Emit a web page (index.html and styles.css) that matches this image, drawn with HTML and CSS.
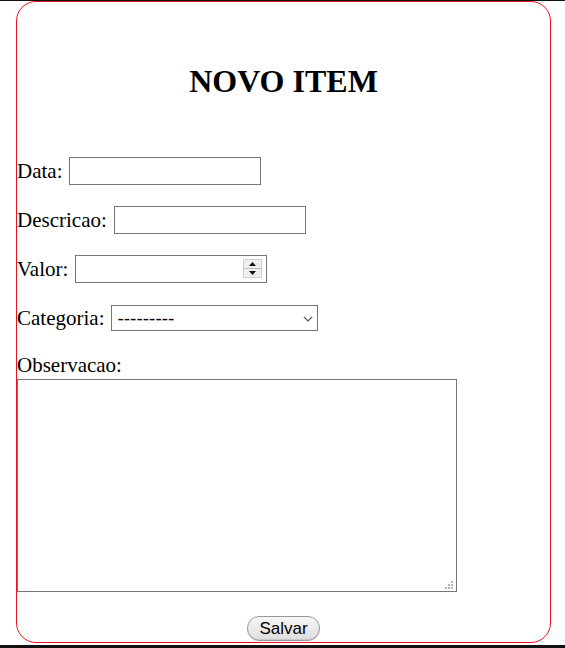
FILE: index.html
```html
<!DOCTYPE html>
<html lang="pt">
<head>
<meta charset="utf-8">
<title>Novo Item</title>
<link rel="stylesheet" href="styles.css">
</head>
<body>
<div class="topline"></div>
<div class="card">
  <h1 class="title">NOVO ITEM</h1>
  <form class="form">
    <div class="row">
      <label class="label" for="data">Data:</label>
      <input class="field" type="text" id="data">
    </div>
    <div class="row">
      <label class="label" for="descricao">Descricao:</label>
      <input class="field" type="text" id="descricao">
    </div>
    <div class="row">
      <label class="label" for="valor">Valor:</label>
      <span class="numwrap">
        <input class="field field-num" type="number" id="valor">
        <span class="spin" aria-hidden="true">
          <span class="spin-btn"><svg width="7" height="4" viewBox="0 0 7 4"><path d="M3.5 0 L7 4 L0 4 Z" fill="#111"/></svg></span>
          <span class="spin-btn"><svg width="7" height="4" viewBox="0 0 7 4"><path d="M0 0 L7 0 L3.5 4 Z" fill="#111"/></svg></span>
        </span>
      </span>
    </div>
    <div class="row">
      <label class="label" for="categoria">Categoria:</label>
      <span class="selwrap">
        <select class="select" id="categoria">
          <option>---------</option>
        </select>
        <svg class="chev" width="10" height="6" viewBox="0 0 10 6" aria-hidden="true"><path d="M0.8 0.8 L5 5 L9.2 0.8" fill="none" stroke="#555" stroke-width="1.2"/></svg>
      </span>
    </div>
    <label class="label obs-label" for="obs">Observacao:</label>
    <span class="tawrap">
      <textarea class="textarea" id="obs"></textarea>
      <svg class="grip" width="8" height="8" viewBox="0 0 8 8" aria-hidden="true">
        <rect x="6" y="0" width="2" height="2" fill="#b5b5b5"/>
        <rect x="3" y="3" width="2" height="2" fill="#b5b5b5"/>
        <rect x="6" y="3" width="2" height="2" fill="#b5b5b5"/>
        <rect x="0" y="6" width="2" height="2" fill="#b5b5b5"/>
        <rect x="3" y="6" width="2" height="2" fill="#b5b5b5"/>
        <rect x="6" y="6" width="2" height="2" fill="#b5b5b5"/>
      </svg>
    </span>
    <button class="btn" type="button">Salvar</button>
  </form>
</div>
<div class="bottomline"></div>
</body>
</html>
```

FILE: styles.css
```css
html, body {
  margin: 0;
  padding: 0;
  background: #fff;
}
body {
  font-family: "Liberation Serif", "Times New Roman", serif;
  color: #000;
  height: 648px;
  overflow: hidden;
}
.topline {
  height: 1px;
  background: #111;
}
.bottomline {
  height: 3px;
  margin-top: 2px;
  background: #111;
}
.card {
  box-sizing: border-box;
  margin-left: 16px;
  width: 535px;
  height: 642px;
  border: 1px solid #e8141b;
  border-radius: 20px;
}
.title {
  margin: 61px 0 0;
  font-size: 32px;
  line-height: 36px;
  font-weight: bold;
  text-align: center;
}
.form {
  margin: 58px 0 0;
}
.row {
  display: flex;
  align-items: center;
  gap: 7px;
  height: 28px;
  margin-bottom: 21px;
}
.label {
  font-size: 21px;
  line-height: 24px;
}
.field {
  box-sizing: border-box;
  width: 192px;
  height: 28px;
  margin: 0;
  border: 1px solid #767676;
  border-radius: 0;
  padding: 1px 2px;
  font-size: 13.33px;
  font-family: "Liberation Sans", Arial, sans-serif;
  background: #fff;
}
.field-num {
  -moz-appearance: textfield;
  appearance: textfield;
}
.field-num::-webkit-inner-spin-button,
.field-num::-webkit-outer-spin-button {
  -webkit-appearance: none;
  margin: 0;
}
.numwrap, .selwrap, .tawrap {
  position: relative;
  display: block;
}
.tawrap {
  width: 440px;
  margin-top: 2px;
}
.spin {
  position: absolute;
  left: 168px;
  top: 4px;
  width: 19px;
  height: 19px;
  box-sizing: border-box;
  border: 1px solid #cfcfcf;
  background: #efefef;
  display: flex;
  flex-direction: column;
}
.spin-btn {
  flex: 1;
  display: flex;
  align-items: center;
  justify-content: center;
}
.spin-btn + .spin-btn {
  border-top: 1px solid #bdbdbd;
}
.select {
  display: block;
  box-sizing: border-box;
  width: 207px;
  height: 26px;
  margin: 0;
  border: 1px solid #767676;
  border-radius: 0;
  padding: 0 2px 0 5px;
  font-size: 19px;
  font-family: "Liberation Sans", Arial, sans-serif;
  background: #fff;
  color: #000;
  -webkit-appearance: none;
  appearance: none;
}
.chev {
  position: absolute;
  left: 192px;
  top: 11px;
}
.obs-label {
  display: block;
}
.textarea {
  display: block;
  box-sizing: border-box;
  width: 440px;
  height: 213px;
  margin: 0;
  border: 1px solid #767676;
  border-radius: 0;
  padding: 2px;
  resize: none;
  font-family: "Liberation Mono", monospace;
  font-size: 13.33px;
}
.grip {
  position: absolute;
  right: 4px;
  bottom: 3px;
}
.btn {
  display: block;
  box-sizing: border-box;
  margin: 24px auto 0;
  width: 73px;
  height: 25px;
  padding: 0;
  border: 1px solid #9a9a9a;
  border-radius: 12px;
  background: linear-gradient(#f7f7f7, #dedede);
  box-shadow: inset 0 -1px 0 #c8c8c8;
  font-family: "Liberation Sans", Arial, sans-serif;
  font-size: 17px;
  color: #000;
  line-height: 22px;
}
```
